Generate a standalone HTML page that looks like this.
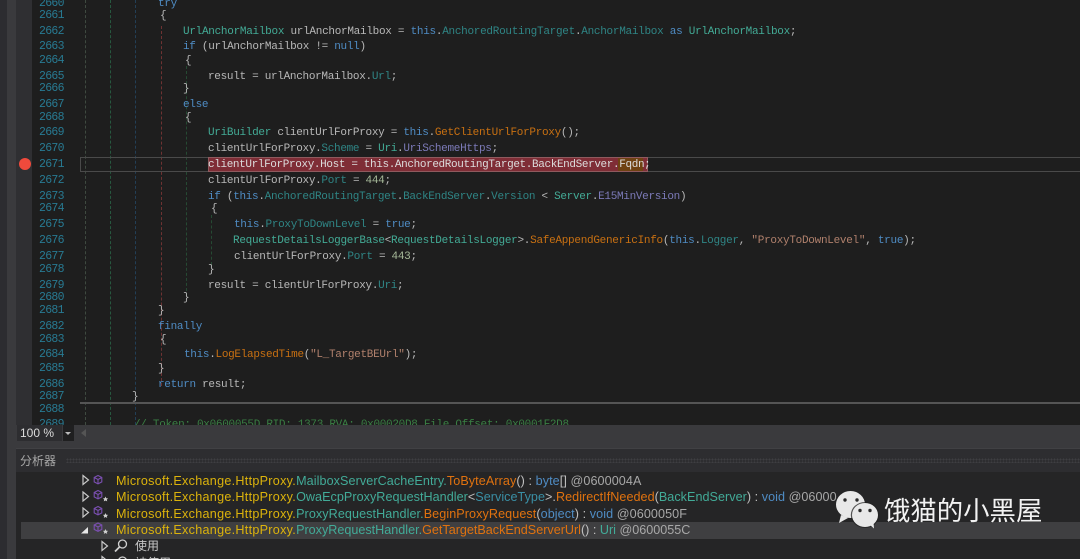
<!DOCTYPE html>
<html><head><meta charset="utf-8">
<style>
html,body{margin:0;padding:0;background:#1e1e1e}
#p{position:relative;width:1080px;height:559px;overflow:hidden;background:#1e1e1e}
.a{position:absolute}
#code{position:absolute;left:0;top:0;width:1080px;height:425px;overflow:hidden;font:11px/14px "Liberation Mono","Noto Sans CJK SC",monospace;letter-spacing:-.3px;color:#b8b8b8;filter:blur(.35px)}
.l{position:absolute;white-space:pre;height:14px;margin-top:1px}
.n{position:absolute;left:39px;color:#2b91af;white-space:pre;font-size:11.5px;letter-spacing:-.7px;margin-top:1px;opacity:.8}
.k{color:#4f8cc4}.t{color:#43ab96}.p{color:#2f8585}.m{color:#c87012}.s{color:#b0806c}.e{color:#7c7ab8}.d{color:#a5b898}.c{color:#3a7f44}
.g{position:absolute;top:0;height:425px;width:0;border-left:1px dashed}
.tr{position:absolute;left:116px;white-space:pre;font:12.6px/16px "Liberation Sans","Noto Sans CJK SC",sans-serif;filter:blur(.25px);color:#c0c0c0}
.y{color:#dcb30c;letter-spacing:.28px}.q{color:#42ab98}.o{color:#e0720f}.b{color:#4f8cc4}.w{color:#a8a8a8}.h{color:#3a8fa5}
</style></head><body><div id="p">
<div class="a" style="left:0;top:0;width:7px;height:559px;background:#2c2c30"></div>
<div class="a" style="left:7px;top:0;width:9px;height:559px;background:#3a3a3d"></div>
<div class="a" style="left:16px;top:0;width:16px;height:425px;background:#2f2f32"></div>

<div class="g" style="left:85px;border-color:#3f4a40"></div>
<div class="g" style="left:110px;border-color:#27583f"></div>
<div class="g" style="left:135px;border-color:#233f56"></div>
<div class="g" style="left:161px;top:26px;height:360px;border-color:#6e3232"></div>
<div class="g" style="left:186px;top:66px;height:230px;border-color:#264a33"></div>
<div class="g" style="left:211px;top:215px;height:50px;border-color:#264a33"></div>

<div class="a" style="left:80px;top:157px;width:1000px;height:13px;border:1.5px solid #4a4a4a"></div>
<div class="a" style="left:208px;top:157px;width:440px;height:15px;background:#7f2d36;border:1px solid #8f5a5e;box-sizing:border-box"></div>
<div class="a" style="left:618px;top:158px;width:25px;height:13px;background:#6f4213"></div>
<div class="a" style="left:80px;top:402px;width:1000px;height:1.5px;background:#555"></div>
<div class="a" style="left:19px;top:158px;width:12px;height:12px;border-radius:50%;background:#f04a3c"></div>

<div id="code">
<span class="n" style="top:-4px">2660</span><span class="n" style="top:8px">2661</span><span class="n" style="top:24px">2662</span><span class="n" style="top:39px">2663</span><span class="n" style="top:53px">2664</span><span class="n" style="top:69px">2665</span><span class="n" style="top:81px">2666</span><span class="n" style="top:97px">2667</span><span class="n" style="top:110px">2668</span><span class="n" style="top:125px">2669</span><span class="n" style="top:141px">2670</span><span class="n" style="top:157px">2671</span><span class="n" style="top:173px">2672</span><span class="n" style="top:189px">2673</span><span class="n" style="top:201px">2674</span><span class="n" style="top:217px">2675</span><span class="n" style="top:233px">2676</span><span class="n" style="top:249px">2677</span><span class="n" style="top:262px">2678</span><span class="n" style="top:278px">2679</span><span class="n" style="top:290px">2680</span><span class="n" style="top:303px">2681</span><span class="n" style="top:319px">2682</span><span class="n" style="top:332px">2683</span><span class="n" style="top:347px">2684</span><span class="n" style="top:361px">2685</span><span class="n" style="top:377px">2686</span><span class="n" style="top:389px">2687</span><span class="n" style="top:402px">2688</span><span class="n" style="top:417px">2689</span>
<div class="l k" style="left:158px;top:-4px">try</div>
<div class="l" style="left:160px;top:8px">{</div>
<div class="l" style="left:183px;top:24px;letter-spacing:-.28px"><span class="t">UrlAnchorMailbox</span> urlAnchorMailbox = <span class="k">this</span>.<span class="p">AnchoredRoutingTarget</span>.<span class="p">AnchorMailbox</span> <span class="k">as</span> <span class="t">UrlAnchorMailbox</span>;</div>
<div class="l" style="left:183px;top:39px"><span class="k">if</span> (urlAnchorMailbox != <span class="k">null</span>)</div>
<div class="l" style="left:185px;top:53px">{</div>
<div class="l" style="left:208px;top:69px">result = urlAnchorMailbox.<span class="p">Url</span>;</div>
<div class="l" style="left:183px;top:81px">}</div>
<div class="l k" style="left:183px;top:97px">else</div>
<div class="l" style="left:185px;top:110px">{</div>
<div class="l" style="left:208px;top:125px"><span class="t">UriBuilder</span> clientUrlForProxy = <span class="k">this</span>.<span class="m">GetClientUrlForProxy</span>();</div>
<div class="l" style="left:208px;top:141px">clientUrlForProxy.<span class="p">Scheme</span> = <span class="t">Uri</span>.<span class="e">UriSchemeHttps</span>;</div>
<div class="l" style="left:208px;top:157px;color:#dcdcdc;letter-spacing:-.37px">clientUrlForProxy.Host = this.AnchoredRoutingTarget.BackEndServer.Fqdn;</div>
<div class="l" style="left:208px;top:173px">clientUrlForProxy.<span class="p">Port</span> = <span class="d">444</span>;</div>
<div class="l" style="left:208px;top:189px;letter-spacing:-.31px"><span class="k">if</span> (<span class="k">this</span>.<span class="p">AnchoredRoutingTarget</span>.<span class="p">BackEndServer</span>.<span class="p">Version</span> &lt; <span class="t">Server</span>.<span class="e">E15MinVersion</span>)</div>
<div class="l" style="left:211px;top:201px">{</div>
<div class="l" style="left:234px;top:217px"><span class="k">this</span>.<span class="p">ProxyToDownLevel</span> = <span class="k">true</span>;</div>
<div class="l" style="left:233px;top:233px;letter-spacing:-.28px"><span class="t">RequestDetailsLoggerBase</span>&lt;<span class="t">RequestDetailsLogger</span>&gt;.<span class="m">SafeAppendGenericInfo</span>(<span class="k">this</span>.<span class="p">Logger</span>, <span class="s">"ProxyToDownLevel"</span>, <span class="k">true</span>);</div>
<div class="l" style="left:234px;top:249px">clientUrlForProxy.<span class="p">Port</span> = <span class="d">443</span>;</div>
<div class="l" style="left:208px;top:262px">}</div>
<div class="l" style="left:208px;top:278px">result = clientUrlForProxy.<span class="p">Uri</span>;</div>
<div class="l" style="left:183px;top:290px">}</div>
<div class="l" style="left:158px;top:303px">}</div>
<div class="l k" style="left:158px;top:319px">finally</div>
<div class="l" style="left:160px;top:332px">{</div>
<div class="l" style="left:184px;top:347px"><span class="k">this</span>.<span class="m">LogElapsedTime</span>(<span class="s">"L_TargetBEUrl"</span>);</div>
<div class="l" style="left:158px;top:361px">}</div>
<div class="l" style="left:158px;top:377px"><span class="k">return</span> result;</div>
<div class="l" style="left:132px;top:389px">}</div>
<div class="l c" style="left:134px;top:417px">// Token: 0x0600055D RID: 1373 RVA: 0x00020D8 File Offset: 0x0001F2D8</div>
</div>

<div class="a" style="left:16px;top:425px;width:1064px;height:16px;background:#3a3a3d"></div>
<div class="a" style="left:17px;top:425px;width:45px;height:16px;background:#2d2d30;color:#ddd;font:12px/16px 'Liberation Sans',sans-serif;text-indent:3px;filter:blur(.2px)">100 %</div>
<div class="a" style="left:63px;top:425px;width:11px;height:16px;background:#1f1f20"></div>
<div class="a" style="left:65px;top:432px;width:0;height:0;border-left:3px solid transparent;border-right:3px solid transparent;border-top:3px solid #bbb"></div>
<div class="a" style="left:81px;top:429px;width:0;height:0;border-top:4px solid transparent;border-bottom:4px solid transparent;border-right:5px solid #555"></div>

<div class="a" style="left:16px;top:441px;width:1064px;height:7px;background:#3a3a3d"></div>
<div class="a" style="left:16px;top:448px;width:1064px;height:24px;background:#2d2d30;border-top:1px solid #414144;box-sizing:border-box"></div>
<div class="a" style="left:20px;top:452px;color:#a8a8a8;font:12px/18px 'Liberation Sans','Noto Sans CJK SC',sans-serif;filter:blur(.2px)">分析器</div>
<div class="a" style="left:66px;top:458px;width:1014px;height:5px;background-image:radial-gradient(#3e3e42 45%,transparent 50%);background-size:3px 3px"></div>
<div class="a" style="left:16px;top:472px;width:1064px;height:87px;background:#252526"></div>
<div class="a" style="left:21px;top:522px;width:1059px;height:16.5px;background:#3f3f41"></div>

<div class="tr" style="top:472.5px"><span class="y">Microsoft.Exchange.HttpProxy.</span><span style="letter-spacing:.08px"><span class="q">MailboxServerCacheEntry.</span><span class="o">ToByteArray</span>() : <span class="b">byte</span>[] <span class="w">@0600004A</span></span></div>
<div class="tr" style="top:489px"><span class="y">Microsoft.Exchange.HttpProxy.</span><span style="letter-spacing:.04px"><span class="q">OwaEcpProxyRequestHandler</span>&lt;<span class="h">ServiceType</span>&gt;.<span class="o">RedirectIfNeeded</span>(<span class="q">BackEndServer</span>) : <span class="b">void</span> <span class="w">@06000</span></span></div>
<div class="tr" style="top:505.5px"><span class="y">Microsoft.Exchange.HttpProxy.</span><span style="letter-spacing:.08px"><span class="q">ProxyRequestHandler.</span><span class="o">BeginProxyRequest</span>(<span class="b">object</span>) : <span class="b">void</span> <span class="w">@0600050F</span></span></div>
<div class="tr" style="top:522px"><span class="y">Microsoft.Exchange.HttpProxy.</span><span class="q">ProxyRequestHandler.</span><span class="o">GetTargetBackEndServerUrl</span>() : <span class="q">Uri</span> <span class="w">@0600055C</span></div>
<div class="a" style="left:135px;top:538px;color:#c8c8c8;font:12px/17px 'Liberation Sans','Noto Sans CJK SC',sans-serif">使用</div>
<div class="a" style="left:135px;top:555px;color:#c8c8c8;font:12px/17px 'Liberation Sans','Noto Sans CJK SC',sans-serif">被使用</div>

<svg class="a" style="left:0;top:0" width="1080" height="559" viewBox="0 0 1080 559">
<g fill="#252526" stroke="#c8c8c8" stroke-width="1.2">
<path d="M83 475.500l5.500 4.500-5.500 4.500z"/><path d="M83 492l5.500 4.500-5.500 4.500z"/><path d="M83 508l5.500 4.500-5.500 4.500z"/><path d="M102 541.500l5.500 4.500-5.500 4.500z"/>
<path d="M102 556.500l5.500 4.500-5.500 4.500z"/>
</g>
<path d="M81 533.500l7-6.500v6.500z" fill="#e8e8e8"/>
<g fill="none" stroke="#7a4fb0" stroke-width="1.1">
<path d="M98 475.500l3.800 2v4.400l-3.800 2-3.800-2v-4.400zM94.200 477.500l3.800 2 3.800-2M98 479.500v4.400"/>
<path d="M98 490.500l3.800 2v4.400l-3.800 2-3.800-2v-4.400zM94.200 492.500l3.800 2 3.800-2M98 494.500v4.400"/>
<path d="M98 506.500l3.800 2v4.400l-3.800 2-3.800-2v-4.400zM94.200 508.500l3.800 2 3.800-2M98 510.500v4.400"/>
<path d="M98 523l3.800 2v4.400l-3.800 2-3.800-2V525zM94.200 525l3.800 2 3.800-2M98 527v4.400"/>
</g>
<g fill="#cfcfcf">
<path d="M105.500 496.500l.8 1.700 1.800.2-1.300 1.200.4 1.800-1.700-.9-1.700.9.400-1.800-1.300-1.200 1.800-.2z"/>
<path d="M105.500 513l.8 1.700 1.800.2-1.300 1.200.4 1.800-1.700-.9-1.700.9.400-1.800-1.300-1.200 1.800-.2z"/>
<path d="M105.500 529l.8 1.700 1.800.2-1.300 1.200.4 1.800-1.700-.9-1.700.9.400-1.800-1.300-1.200 1.800-.2z"/>
</g>
<g fill="none" stroke="#d0d0d0" stroke-width="1.3">
<circle cx="122.500" cy="544" r="4"/><path d="M119.500 547l-4.500 4.500" stroke-width="1.800"/>
<circle cx="122.500" cy="561" r="4"/>
</g>
<!-- WeChat logo -->
<ellipse cx="850.500" cy="504.500" rx="14.500" ry="13.500" fill="#e8e8e8"/>
<path d="M841 515l-2 8 9-5z" fill="#e8e8e8"/>
<ellipse cx="865" cy="515" rx="14.200" ry="13" fill="#222" opacity=".75"/>
<ellipse cx="865" cy="515" rx="13" ry="12" fill="#e8e8e8"/>
<path d="M869 524l5 4.500-.5-6.500z" fill="#e8e8e8"/>
<circle cx="845" cy="500" r="1.700" fill="#2a2a2a"/><circle cx="857" cy="500" r="1.700" fill="#2a2a2a"/>
<circle cx="860" cy="510.500" r="1.700" fill="#2a2a2a"/><circle cx="870" cy="510.500" r="1.700" fill="#2a2a2a"/>
</svg>
<div class="a" style="left:884px;top:489px;color:#f2f2f2;font:26.400px/40px 'Noto Sans CJK SC','WenQuanYi Zen Hei',sans-serif;font-weight:400;white-space:pre">饿猫的小黑屋</div>
</div></body></html>
